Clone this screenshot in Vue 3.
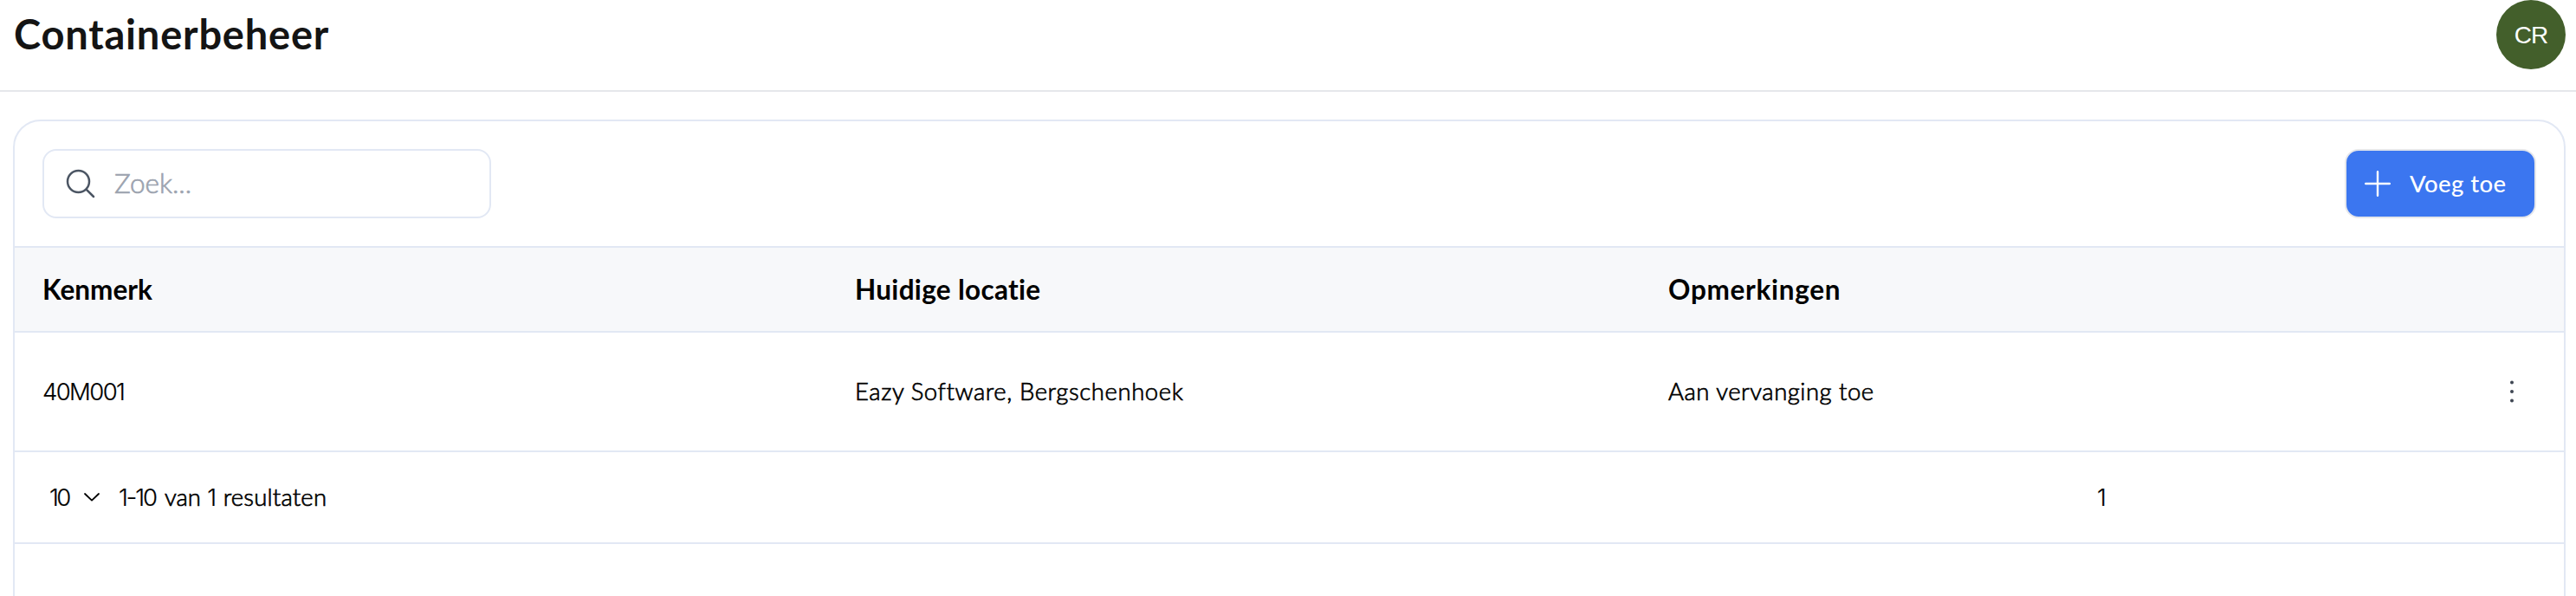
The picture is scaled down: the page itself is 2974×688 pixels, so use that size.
<script setup>
const columns = [
  { label: 'Kenmerk', name: 'ref' },
  { label: 'Huidige locatie', name: 'location' },
  { label: 'Opmerkingen', name: 'remarks' },
]
const rows = [
  { ref: '40M001', location: 'Eazy Software, Bergschenhoek', remarks: 'Aan vervanging toe' },
]
</script>

<template>
  <div class="page">
    <header class="topbar">
      <h1 class="title">Containerbeheer</h1>
      <div class="avatar">CR</div>
    </header>

    <main class="card">
      <div class="toolbar">
        <label class="search">
          <svg class="search-icon" viewBox="0 0 24 24" fill="none" stroke="currentColor" stroke-width="1.5" stroke-linecap="round" stroke-linejoin="round">
            <path d="m21 21-5.197-5.197m0 0A7.5 7.5 0 1 0 5.196 5.196a7.5 7.5 0 0 0 10.607 10.607Z" />
          </svg>
          <span class="placeholder">Zoek...</span>
        </label>
        <button class="add" type="button">
          <svg class="plus" viewBox="0 0 30 30" fill="none" stroke="currentColor" stroke-width="2.4" stroke-linecap="round">
            <path d="M15 1.2v27.6M1.2 15h27.6" />
          </svg>
          <span class="add-label">Voeg toe</span>
        </button>
      </div>

      <div class="row head">
        <div v-for="c in columns" :key="c.name" class="cell" :class="'head-' + c.name">{{ c.label }}</div>
      </div>

      <div v-for="r in rows" :key="r.ref" class="row body">
        <div v-for="c in columns" :key="c.name" class="cell" :class="'body-' + c.name">{{ r[c.name] }}</div>
        <div class="actions">
          <svg class="dots" viewBox="0 0 6 26" fill="currentColor">
            <circle cx="3" cy="2.4" r="2" />
            <circle cx="3" cy="13" r="2" />
            <circle cx="3" cy="23.6" r="2" />
          </svg>
        </div>
      </div>

      <div class="footer">
        <span class="num size">10</span>
        <svg class="chevron" viewBox="0 0 18 10" fill="none" stroke="currentColor" stroke-width="1.8" stroke-linecap="round" stroke-linejoin="round">
          <path d="M1 1l8 7.6L17 1" />
        </svg>
        <span class="results"><span class="num range">1-10</span> <span class="van">van</span> <span class="num">1</span> <span class="word">resultaten</span></span>
        <div class="pager"><span class="num">1</span></div>
      </div>
    </main>
  </div>
</template>

<style scoped>
.page {
  width: 2974px;
  height: 688px;
  overflow: hidden;
  background: #fff;
  color: #000;
  font-family: Lato, "Open Sans", sans-serif;
  font-size: 27.5px;
}
.page, .page * { box-sizing: border-box; }
.topbar {
  display: flex;
  justify-content: space-between;
  align-items: flex-start;
  height: 106px;
  padding: 0 12px 0 16px;
  border-bottom: 2px solid #e5e7eb;
}
.title {
  margin: 0;
  font-size: 47px;
  line-height: 79px;
  font-weight: 700;
  letter-spacing: 0.8px;
  color: #141414;
}
.avatar {
  width: 80px;
  height: 80px;
  border-radius: 50%;
  background: #435f2b;
  color: #fff;
  font: 28px/81px "Liberation Sans", Arial, sans-serif;
  letter-spacing: -0.9px;
  text-align: center;
}
.card {
  margin: 32px 12px 0 15px;
  height: 600px;
  border: 2px solid #e2e8f4;
  border-radius: 32px;
  overflow: hidden;
}
.toolbar {
  display: flex;
  justify-content: space-between;
  height: 146px;
  padding: 32px;
  border-bottom: 2px solid #e2e8f4;
}
.search {
  display: flex;
  align-items: center;
  width: 518px;
  height: 80px;
  padding-left: 22px;
  border: 2px solid #e2e8f4;
  border-radius: 16px;
}
.search-icon { width: 40px; height: 40px; color: #4b5563; }
.placeholder {
  margin: 0 0 2px 19px;
  font-size: 31.5px;
  font-weight: 300;
  color: #9ca3af;
  -webkit-text-stroke: 0.7px #9ca3af;
}
.add {
  display: flex;
  align-items: center;
  width: 221px;
  height: 80px;
  padding: 0 0 0 21px;
  border: 2px solid #e5e7eb;
  border-radius: 16px;
  background: #3b76f0;
  color: #fff;
  font-family: inherit;
  font-size: 27.5px;
  font-weight: 500;
}
.plus { width: 30px; height: 30px; }
.add-label { margin: 0 0 2px 22px; letter-spacing: 0.4px; }
.row {
  display: grid;
  grid-template-columns: 938px 939px 1fr 180px;
  align-items: center;
  border-bottom: 2px solid #e2e8f4;
}
.cell { padding-left: 32px; white-space: nowrap; }
.head {
  height: 98px;
  background: #f7f8fa;
  font-size: 31.5px;
  font-weight: 700;
}
.head-location { letter-spacing: 0.31px; }
.head-remarks { letter-spacing: 0.7px; }
.body { height: 138px; }
.body-ref {
  font-family: Inter, "Open Sans", sans-serif;
  font-weight: 300;
  letter-spacing: -1.6px;
  -webkit-text-stroke: 0.2px #000;
}
.body-location,
.body-remarks {
  padding-bottom: 1px;
  font-weight: 300;
  -webkit-text-stroke: 0.7px #000;
}
.body-location { letter-spacing: 0.58px; }
.body-remarks { letter-spacing: 0.5px; }
.actions { display: flex; justify-content: flex-end; padding-right: 57px; }
.dots { width: 6px; height: 26px; color: #3f4753; }
.footer {
  display: flex;
  align-items: center;
  height: 106px;
  padding-left: 40px;
  border-bottom: 2px solid #e2e8f4;
}
.num {
  font-family: Inter, "Open Sans", sans-serif;
  font-weight: 300;
  -webkit-text-stroke: 0.2px #000;
}
.size { width: 40px; letter-spacing: -2.5px; }
.chevron { width: 18px; height: 10px; }
.results {
  margin-left: 22px;
  width: 2248px;
  white-space: nowrap;
  font-weight: 300;
  -webkit-text-stroke: 0.7px #000;
}
.range { margin-right: 3px; letter-spacing: -2px; }
.word { letter-spacing: 0.2px; }
.pager { margin-left: 36px; }
</style>

<style>
body { margin: 0; background: #fff; }
</style>
